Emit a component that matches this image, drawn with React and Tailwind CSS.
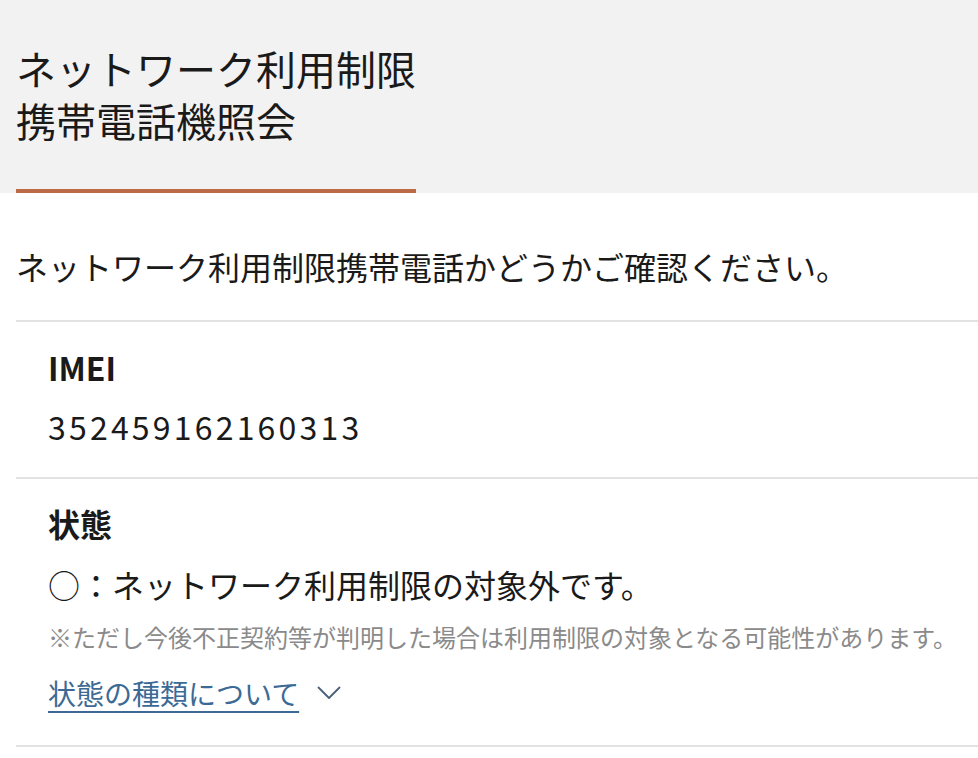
import React from 'react';

const font = "font-['Noto_Sans_CJK_JP',sans-serif]";

const ChevronDown = () => (
  <svg width="24" height="14" viewBox="0 0 24 14" fill="none" className="shrink-0">
    <polyline points="1.5,1.5 12,12 22.5,1.5" stroke="#4a6078" strokeWidth="1.8" strokeLinecap="round" strokeLinejoin="round" />
  </svg>
);

export default function App() {
  return (
    <div className={`${font} w-[978px] h-[758px] overflow-hidden bg-white text-[#1a1a1a]`}>
      {/* 見出し */}
      <div className="bg-[#f2f2f2] px-4 pt-[42px]">
        <h1 className="text-[40px] leading-[52px] font-normal">
          ネットワーク利用制限
          <br />
          携帯電話機照会
        </h1>
        <div className="mt-[43px] w-[400px] h-[4px] bg-[#bd6a47]"></div>
      </div>

      <div className="pl-4">
        <p className="pt-[49px] pb-[30px] text-[32px] leading-[48px]">
          ネットワーク利用制限携帯電話かどうかご確認ください。
        </p>

        <div className="border-t-2 border-[#e2e2e2] px-8 pt-[21px] pb-[27px]">
          <div className="text-[32px] leading-[48px] font-bold">IMEI</div>
          <div className="mt-[11px] text-[32px] leading-[48px] tracking-[3.2px]">352459162160313</div>
        </div>

        <div className="border-t-2 border-[#e2e2e2] border-b-2 px-8 pt-[20px] pb-[31px]">
          <div className="text-[32px] leading-[48px] font-bold">状態</div>
          <div className="mt-[13px] text-[32px] leading-[48px]">○：ネットワーク利用制限の対象外です。</div>
          <div className="mt-[11px] text-[24px] leading-[36px] text-[#8a8a8a] whitespace-nowrap">
            ※ただし今後不正契約等が判明した場合は利用制限の対象となる可能性があります。
          </div>
          <div className="mt-[17px] flex items-center gap-[18px]">
            <a className="text-[28px] leading-[42px] text-[#3d6a95] underline decoration-2 underline-offset-[6px]">
              状態の種類について
            </a>
            <ChevronDown />
          </div>
        </div>
      </div>
    </div>
  );
}
